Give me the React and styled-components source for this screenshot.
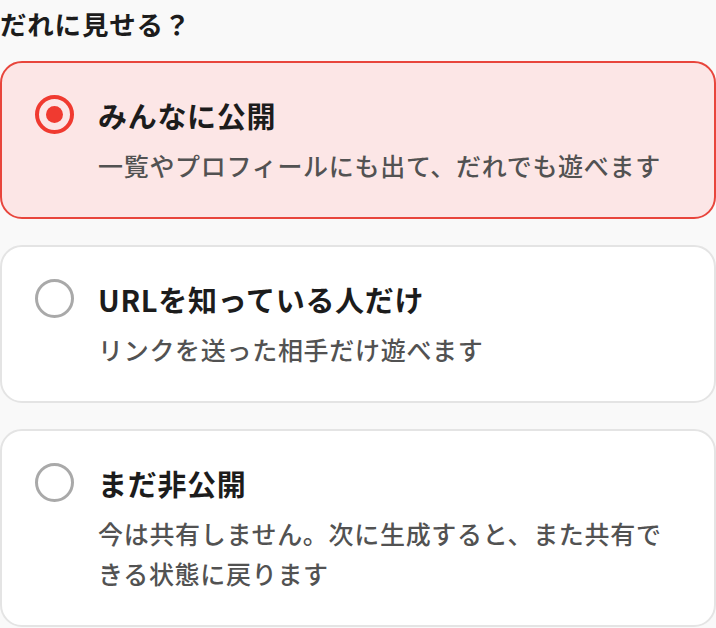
import React from "react";
import styled, { createGlobalStyle } from "styled-components";

const Global = createGlobalStyle`
  html, body { margin: 0; padding: 0; background: #f9f9f9; }
  body { font-family: "Noto Sans CJK JP", "Noto Sans", sans-serif; }
  * { box-sizing: border-box; }
`;

const Page = styled.div`
  width: 716px;
  display: flex;
  flex-direction: column;
`;

const Heading = styled.h2`
  margin: 0;
  padding-top: 6px;
  font-size: 26.5px;
  line-height: 36px;
  font-weight: 700;
  color: #1c1c1c;
  letter-spacing: 0.8px;
  margin-bottom: 19px;
`;

const List = styled.div`
  display: flex;
  flex-direction: column;
  gap: 26px;
`;

const Card = styled.label`
  display: flex;
  align-items: flex-start;
  gap: 24px;
  padding: 32px 40px 32px 33px;
  border-radius: 22px;
  border: 2px solid ${(p) => (p.$selected ? "#e8453c" : "#e4e4e4")};
  background: ${(p) => (p.$selected ? "#fce6e6" : "#ffffff")};
  cursor: pointer;
`;

const Radio = styled.span`
  flex: none;
  width: 39px;
  height: 39px;
  margin-top: 0px;
  border-radius: 50%;
  border: ${(p) => (p.$selected ? "4px solid #f03a30" : "3.5px solid #a9a9a9")};
  display: flex;
  align-items: center;
  justify-content: center;
  &::after {
    content: "";
    display: ${(p) => (p.$selected ? "block" : "none")};
    width: 17px;
    height: 17px;
    border-radius: 50%;
    background: #f03a30;
  }
`;

const Body = styled.div`
  display: flex;
  flex-direction: column;
  gap: 10px;
  min-width: 0;
`;

const Title = styled.div`
  font-size: 29px;
  line-height: 40px;
  font-weight: 700;
  color: #1c1c1c;
  letter-spacing: 0.7px;
`;

const Desc = styled.div`
  font-size: 25px;
  line-height: 40px;
  font-weight: 500;
  color: #525252;
  letter-spacing: 0.7px;
`;

const options = [
  {
    title: "みんなに公開",
    desc: "一覧やプロフィールにも出て、だれでも遊べます",
    selected: true,
  },
  {
    title: "URLを知っている人だけ",
    desc: "リンクを送った相手だけ遊べます",
  },
  {
    title: "まだ非公開",
    desc: "今は共有しません。次に生成すると、また共有できる状態に戻ります",
  },
];

export default function App() {
  return (
    <Page>
      <Global />
      <Heading>だれに見せる？</Heading>
      <List>
        {options.map((o) => (
          <Card key={o.title} $selected={o.selected}>
            <Radio $selected={o.selected} />
            <Body>
              <Title>{o.title}</Title>
              <Desc>{o.desc}</Desc>
            </Body>
          </Card>
        ))}
      </List>
    </Page>
  );
}
